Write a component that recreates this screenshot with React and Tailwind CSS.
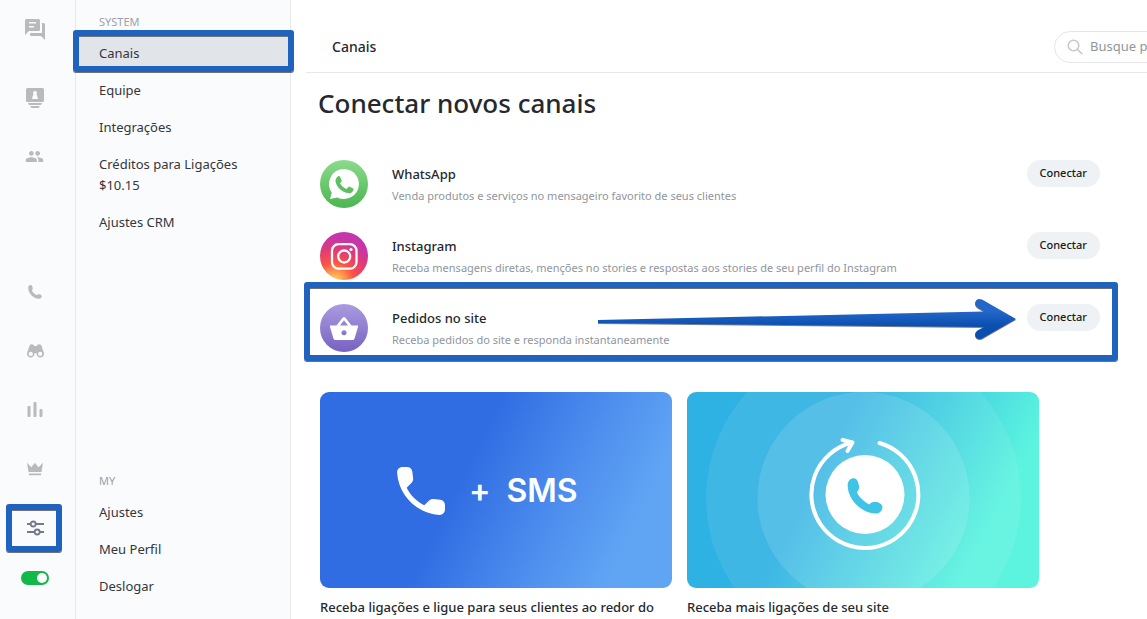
import React, { useState } from 'react';
import { MdPeople } from 'react-icons/md';

const ChatIcon = () => (
  <svg className="w-5 h-[21px]" viewBox="0 0 20 21" fill="currentColor">
    <path fillRule="evenodd" d="M1.5 0h12A1.5 1.5 0 0 1 15 1.5v9a1.5 1.5 0 0 1-1.5 1.5H4l-4 4V1.5A1.5 1.5 0 0 1 1.5 0zM4 3v1.5h7V3zm0 4v1.5h5V7z" />
    <path d="M17 4h1.5A1.5 1.5 0 0 1 20 5.500V21l-4-4H6.500A1.500 1.500 0 0 1 5 15.500V14h12z" />
  </svg>
);

const ContactsIcon = () => (
  <svg className="w-[18px] h-5" viewBox="0 0 18 20" fill="currentColor">
    <path fillRule="evenodd" d="M1.500 0h15A1.500 1.500 0 0 1 18 1.500v11A1.500 1.500 0 0 1 16.500 14h-15A1.500 1.500 0 0 1 0 12.500v-11A1.500 1.500 0 0 1 1.500 0zM9 3a2 2 0 0 0-1.300 3.500C7 7 6.800 8 6.500 9L6 11h6l-.5-2c-.3-1-.5-2-1.200-2.500A2 2 0 0 0 9 3z" />
    <path d="M2 15h14l-1 2H3zM4 18h10l-1.500 2h-7z" />
  </svg>
);

const Handset = ({ className }) => (
  <svg className={className} viewBox="0 0 36 36" fill="currentColor">
    <path d="M.8 5C2 2 4 0 7 .2c3 .2 4.500 3.800 5 7.800.4 3-.7 5-2 5.800C10 17 18 25 22.500 26.500 23.500 24.500 25.500 24 28 24c4 0 7 2 7.500 5-.2 4-3.500 7-7.500 6.500C14 35-1 20 .8 5z" />
  </svg>
);

const BinocularsIcon = () => (
  <svg className="w-[17px] h-[14px]" viewBox="0 0 17 14" fill="currentColor">
    <path fillRule="evenodd" d="M4.500.3C6.200.3 7 1 7.200 2h2.600c.2-1 1-1.700 2.700-1.700 1.200 0 1.800.7 2.200 2l1.900 5.800A3.700 3.700 0 1 1 9.600 9.500c-.6-.4-1.600-.4-2.200 0A3.700 3.700 0 1 1 .4 8.100l1.900-5.800c.4-1.300 1-2 2.200-2zM3.800 7.800a2.100 2.100 0 1 0 0 4.200 2.100 2.100 0 0 0 0-4.200zm9.400 0a2.100 2.100 0 1 0 0 4.200 2.100 2.100 0 0 0 0-4.200z" />
  </svg>
);

const BarsIcon = () => (
  <svg className="w-4 h-[15px]" viewBox="0 0 16 15" fill="currentColor">
    <rect x="0.500" y="4" width="3" height="11" rx="1" />
    <rect x="6.500" y="0" width="3" height="15" rx="1" />
    <rect x="12.500" y="7" width="3" height="8" rx="1" />
  </svg>
);

const CrownIcon = () => (
  <svg className="w-4 h-[14px]" viewBox="0 0 16 14" fill="currentColor">
    <path d="M0 .8l4.300 4.400L7.800.8l3.700 4.400L16 .8 14.500 10h-13zM1.800 11.500h12.400l-.2 1.700H2z" />
  </svg>
);

const SlidersIcon = () => (
  <svg className="w-[18px] h-4" viewBox="0 0 18 16" fill="none" stroke="currentColor" strokeWidth="1.800">
    <path d="M1 4h3.500M9.500 4H18M1 12h7.500M13.500 12H18" />
    <circle cx="7.200" cy="4" r="2.500" />
    <circle cx="11.200" cy="12" r="2.500" />
  </svg>
);

const WhatsAppLogo = () => (
  <svg className="w-12 h-12 shrink-0" viewBox="0 0 48 48">
    <defs>
      <linearGradient id="wa" x1="0" y1="0" x2="0" y2="1">
        <stop offset="0" stopColor="#8adb8c" />
        <stop offset="1" stopColor="#4cb550" />
      </linearGradient>
    </defs>
    <circle cx="24" cy="24" r="24" fill="url(#wa)" />
    <path fill="#fff" d="M24 9a15 15 0 1 1-6.800 28.400L10 39l1.800-6.300A15 15 0 0 1 24 9z" />
    <path fill="#5cc060" d="M18.200 16.200c.5-.3 1.400-.3 1.800.4l1.600 3.600c.2.600 0 1-.3 1.500l-1.200 1.500c1.500 2.800 3.600 4.600 6.500 5.800l1.700-2c.4-.5.800-.6 1.400-.3l3 1.500c.6.3.9.6.8 1.200-.3 2.600-2.600 4-5 3.700-6.700-1-12-6-13-11.700-.2-2.200.9-4.200 2.700-5.200z" />
  </svg>
);

const InstagramLogo = () => (
  <svg className="w-12 h-12 shrink-0" viewBox="0 0 48 48">
    <defs>
      <radialGradient id="ig" cx="0.300" cy="1.050" r="1.050">
        <stop offset="0" stopColor="#ffd65c" />
        <stop offset="0.150" stopColor="#ffb152" />
        <stop offset="0.400" stopColor="#fb5245" />
        <stop offset="0.650" stopColor="#e23c74" />
        <stop offset="0.900" stopColor="#c535ab" />
      </radialGradient>
    </defs>
    <circle cx="24" cy="24" r="24" fill="url(#ig)" />
    <g fill="none" stroke="#fff" strokeWidth="2.300">
      <rect x="12" y="12.200" width="24.500" height="24.500" rx="6.500" />
      <circle cx="24.200" cy="24.500" r="6" />
    </g>
    <circle cx="31" cy="17.500" r="1.600" fill="#fff" />
  </svg>
);

const BasketLogo = () => (
  <svg className="w-12 h-12 shrink-0" viewBox="0 0 48 48">
    <defs>
      <linearGradient id="bk" x1="0" y1="0" x2="0" y2="1">
        <stop offset="0" stopColor="#aa9be0" />
        <stop offset="1" stopColor="#7762c1" />
      </linearGradient>
    </defs>
    <circle cx="24" cy="24" r="24" fill="url(#bk)" />
    <path fill="#fff" fillRule="evenodd" d="M10.500 21.500h6l6.300-8c.6-.8 1.800-.8 2.400 0l6.300 8h6c.5 0 .8.500.6 1L34.500 34.800a2 2 0 0 1-1.900 1.300H15.400a2 2 0 0 1-1.900-1.300L9.900 22.500c-.2-.5.100-1 .6-1zm9.500 0h8l-4-5.200zM24 26.300a2.500 2.500 0 1 0 0 5 2.500 2.500 0 0 0 0-5z" />
  </svg>
);

const topNav = [
  { label: 'Chats', icon: <ChatIcon />, cell: 'h-[58px] mb-[11px]' },
  { label: 'Contatos', icon: <ContactsIcon />, cell: 'h-[58px]' },
  { label: 'Clientes', icon: <MdPeople size={19} />, cell: 'h-[59px]' },
];

const bottomNav = [
  { label: 'Ligações', icon: <Handset className="w-[14px] h-[14px]" /> },
  { label: 'Visitantes', icon: <BinocularsIcon /> },
  { label: 'Relatórios', icon: <BarsIcon /> },
  { label: 'Planos', icon: <CrownIcon /> },
  { label: 'Configurações', icon: <SlidersIcon />, active: true },
];

const channels = [
  { name: 'WhatsApp', text: 'Venda produtos e serviços no mensageiro favorito de seus clientes', logo: <WhatsAppLogo /> },
  { name: 'Instagram', text: 'Receba mensagens diretas, menções no stories e respostas aos stories de seu perfil do Instagram', logo: <InstagramLogo /> },
  { name: 'Pedidos no site', text: 'Receba pedidos do site e responda instantaneamente', logo: <BasketLogo />, marked: true },
];

const Marker = ({ className }) => (
  <div className={`absolute z-10 pointer-events-none rounded-[3px] border-6 border-[#2063be] shadow-[0_1px_0_#6f7378,inset_0_1px_0_#6f7378] ${className}`} />
);

const MenuItem = ({ children, active }) => (
  <li className={active ? 'relative bg-[#e1e4e8]' : ''}>
    <a href="#" className="block px-[23px] py-2 text-[13px] leading-[21px] text-[#33373c]">{children}</a>
    {active && <Marker className="-top-[5px] bottom-0 -left-[3px] -right-1" />}
  </li>
);

const Arrow = () => (
  <svg className="absolute z-10 pointer-events-none right-[84px] -top-[6px] w-[418px] h-[43px]" viewBox="0 0 418 43">
    <defs>
      <linearGradient id="arrow" x1="0" y1="0" x2="0" y2="43" gradientUnits="userSpaceOnUse">
        <stop offset="0.300" stopColor="#2467c8" />
        <stop offset="0.650" stopColor="#0a4fb0" />
      </linearGradient>
    </defs>
    <path
      fill="#7c8085"
      transform="translate(0 1)"
      d="M0 22L386 13.500L379.500 9.500C374.500 6 378-1 384 1.500L418 21L384 40.500C378 43 374.500 36 379.500 32.500L386 29L0 25z"
    />
    <path
      fill="url(#arrow)"
      d="M0 22L386 13.500L379.500 9.500C374.500 6 378-1 384 1.500L418 21L384 40.500C378 43 374.500 36 379.500 32.500L386 29L0 25z"
    />
  </svg>
);

const SmsBanner = () => (
  <div className="h-[196px] rounded-[9px] flex items-center pt-[2px] pl-[69px] text-white bg-[linear-gradient(116deg,#306de3_41%,#4f8fee_67%,#5fa5f4_85%)]">
    <svg className="w-16 h-16" viewBox="0 0 24 24" fill="currentColor">
      <path d="M19.230 15.260l-2.540-.29c-.61-.07-1.210.14-1.640.57l-1.840 1.840c-2.830-1.440-5.150-3.750-6.590-6.590l1.850-1.850c.43-.43.64-1.030.57-1.640l-.29-2.520c-.12-1.010-.97-1.770-1.990-1.770H5.030c-1.130 0-2.070.94-2 2.070.53 8.540 7.360 15.360 15.890 15.890 1.130.07 2.070-.87 2.070-2v-1.730c.01-1.010-.75-1.860-1.760-1.980z" />
    </svg>
    <span className="ml-4 font-['Inter',sans-serif] text-[32px] font-semibold">+</span>
    <span className="ml-4 font-['Inter',sans-serif] text-[32px] font-semibold">SMS</span>
  </div>
);

const CallbackBanner = () => (
  <svg className="w-full h-[196px] rounded-[9px]" viewBox="0 0 352 196" preserveAspectRatio="xMidYMid slice">
    <defs>
      <linearGradient id="cb" gradientUnits="userSpaceOnUse" x1="142" y1="62" x2="300" y2="143">
        <stop offset="0" stopColor="#2eb1e3" />
        <stop offset="1" stopColor="#5cf4df" />
      </linearGradient>
    </defs>
    <rect width="352" height="196" fill="url(#cb)" />
    <circle cx="176.500" cy="106" r="157.500" fill="#fff" fillOpacity="0.080" />
    <circle cx="176.500" cy="106" r="106" fill="#fff" fillOpacity="0.120" />
    <circle cx="178" cy="102.500" r="39.500" fill="#fff" />
    <g fill="none" stroke="#fff" strokeWidth="4" strokeLinecap="round" strokeLinejoin="round">
      <path d="M192.500 51A53.500 53.500 0 1 1 164 50.800" />
      <path d="M155.500 48l10 2.500-5 8.500" />
    </g>
    <svg x="160" y="86" width="36" height="36" viewBox="0 0 36 36">
      <path fill="#41c3e8" d="M.8 5C2 2 4 0 7 .2c3 .2 4.500 3.800 5 7.800.4 3-.7 5-2 5.800C10 17 18 25 22.500 26.500 23.500 24.500 25.500 24 28 24c4 0 7 2 7.500 5-.2 4-3.500 7-7.500 6.500C14 35-1 20 .8 5z" />
    </svg>
  </svg>
);

export default function App() {
  const [online, setOnline] = useState(true);

  return (
    <div className="flex h-screen overflow-hidden bg-white font-['Segoe_UI','Noto_Sans',sans-serif] text-[#24292e]">
      {/* Icon rail */}
      <nav className="flex flex-col justify-between w-[76px] shrink-0 bg-[#fafbfd] border-r border-[#e6e8ea] text-[#b9babc]">
        <div>
          {topNav.map(item => (
            <a key={item.label} href="#" aria-label={item.label} className={`flex items-center justify-center pr-[6px] ${item.cell}`}>
              {item.icon}
            </a>
          ))}
        </div>
        <div className="flex flex-col pb-[34px]">
          {bottomNav.map(item => (
            <a key={item.label} href="#" aria-label={item.label}
              className={`relative flex items-center justify-center h-[59px] pr-[5px] ${item.active ? 'text-[#727a8c]' : ''}`}>
              {item.icon}
              {item.active && <Marker className="left-[6px] w-14 top-[6px] h-12" />}
            </a>
          ))}
          <input type="checkbox" aria-label="Online" checked={online} onChange={e => setOnline(e.target.checked)}
            className="appearance-none mt-[14px] ml-[21px] w-7 h-[14px] rounded-full bg-gray-300 checked:bg-[#12b84a] p-[2px] flex checked:justify-end before:w-[10px] before:h-[10px] before:rounded-full before:bg-white" />
        </div>
      </nav>

      {/* Settings menu */}
      <aside className="flex flex-col justify-between w-[215px] shrink-0 bg-[#fafbfd] border-r border-[#e6e8ea]">
        <div>
          <h2 className="px-[23px] pt-[13px] pb-1 text-[11px] leading-[18px] text-[#9ba1aa]">SYSTEM</h2>
          <ul>
            <MenuItem active>Canais</MenuItem>
            <MenuItem>Equipe</MenuItem>
            <MenuItem>Integrações</MenuItem>
            <MenuItem>Créditos para Ligações<br />$10.15</MenuItem>
            <MenuItem>Ajustes CRM</MenuItem>
          </ul>
        </div>
        <div className="pb-[14px]">
          <h2 className="px-[23px] pb-1 text-[11px] leading-[18px] text-[#9ba1aa]">MY</h2>
          <ul>
            <MenuItem>Ajustes</MenuItem>
            <MenuItem>Meu Perfil</MenuItem>
            <MenuItem>Deslogar</MenuItem>
          </ul>
        </div>
      </aside>

      <main className="flex-1 min-w-0 overflow-hidden">
        <header className="ml-[15px] flex items-center justify-between min-w-[960px] h-[73px] pt-[21px] pl-[26px] border-b border-[#e6e8ea]">
          <div className="text-[14px] font-medium">Canais</div>
          <label className="flex items-center gap-[7px] w-[212px] h-8 pl-3 rounded-full border border-[#e4e6e8]">
            <svg className="w-4 h-4 shrink-0 text-[#c3c8cd]" viewBox="0 0 16 16" fill="none" stroke="currentColor" strokeWidth="1.500" strokeLinecap="round">
              <circle cx="6.500" cy="6.500" r="5.300" />
              <path d="M10.500 10.500l4.300 4.300" />
            </svg>
            <input type="search" aria-label="Busque" placeholder="Busque por canais"
              className="w-full bg-transparent text-[13px] outline-none placeholder:text-[#8f969e]" />
          </label>
        </header>

        <div className="pl-[29px] pr-[47px]">
          <h1 className="-ml-[2px] pt-3 text-[26px] leading-9 font-medium">Conectar novos canais</h1>

          <ul className="mt-[39px]">
            {channels.map(channel => (
              <li key={channel.name} className="relative flex items-start h-12 mb-6">
                {channel.logo}
                <div className="ml-6 flex-1 min-w-0 pt-1">
                  <div className="text-[13px] leading-[21px] font-medium">{channel.name}</div>
                  <div className="text-[11px] leading-[21px] text-[#8f969e] whitespace-nowrap">{channel.text}</div>
                </div>
                <button type="button" className="h-[27px] px-[13px] rounded-full bg-[#eef2f4] text-[11px] font-medium text-[#16191c]">Conectar</button>
                {channel.marked && <Marker className="-left-4 -right-[18px] -top-[22px] -bottom-[9px]" />}
                {channel.marked && <Arrow />}
              </li>
            ))}
          </ul>

          <div className="flex gap-[15px] mt-10">
            <article className="w-[352px]">
              <SmsBanner />
              <h3 className="mt-[9px] text-[13px] leading-[21px] font-medium whitespace-nowrap">Receba ligações e ligue para seus clientes ao redor do</h3>
            </article>
            <article className="w-[352px]">
              <CallbackBanner />
              <h3 className="mt-[9px] text-[13px] leading-[21px] font-medium">Receba mais ligações de seu site</h3>
            </article>
          </div>
        </div>
      </main>
    </div>
  );
}
